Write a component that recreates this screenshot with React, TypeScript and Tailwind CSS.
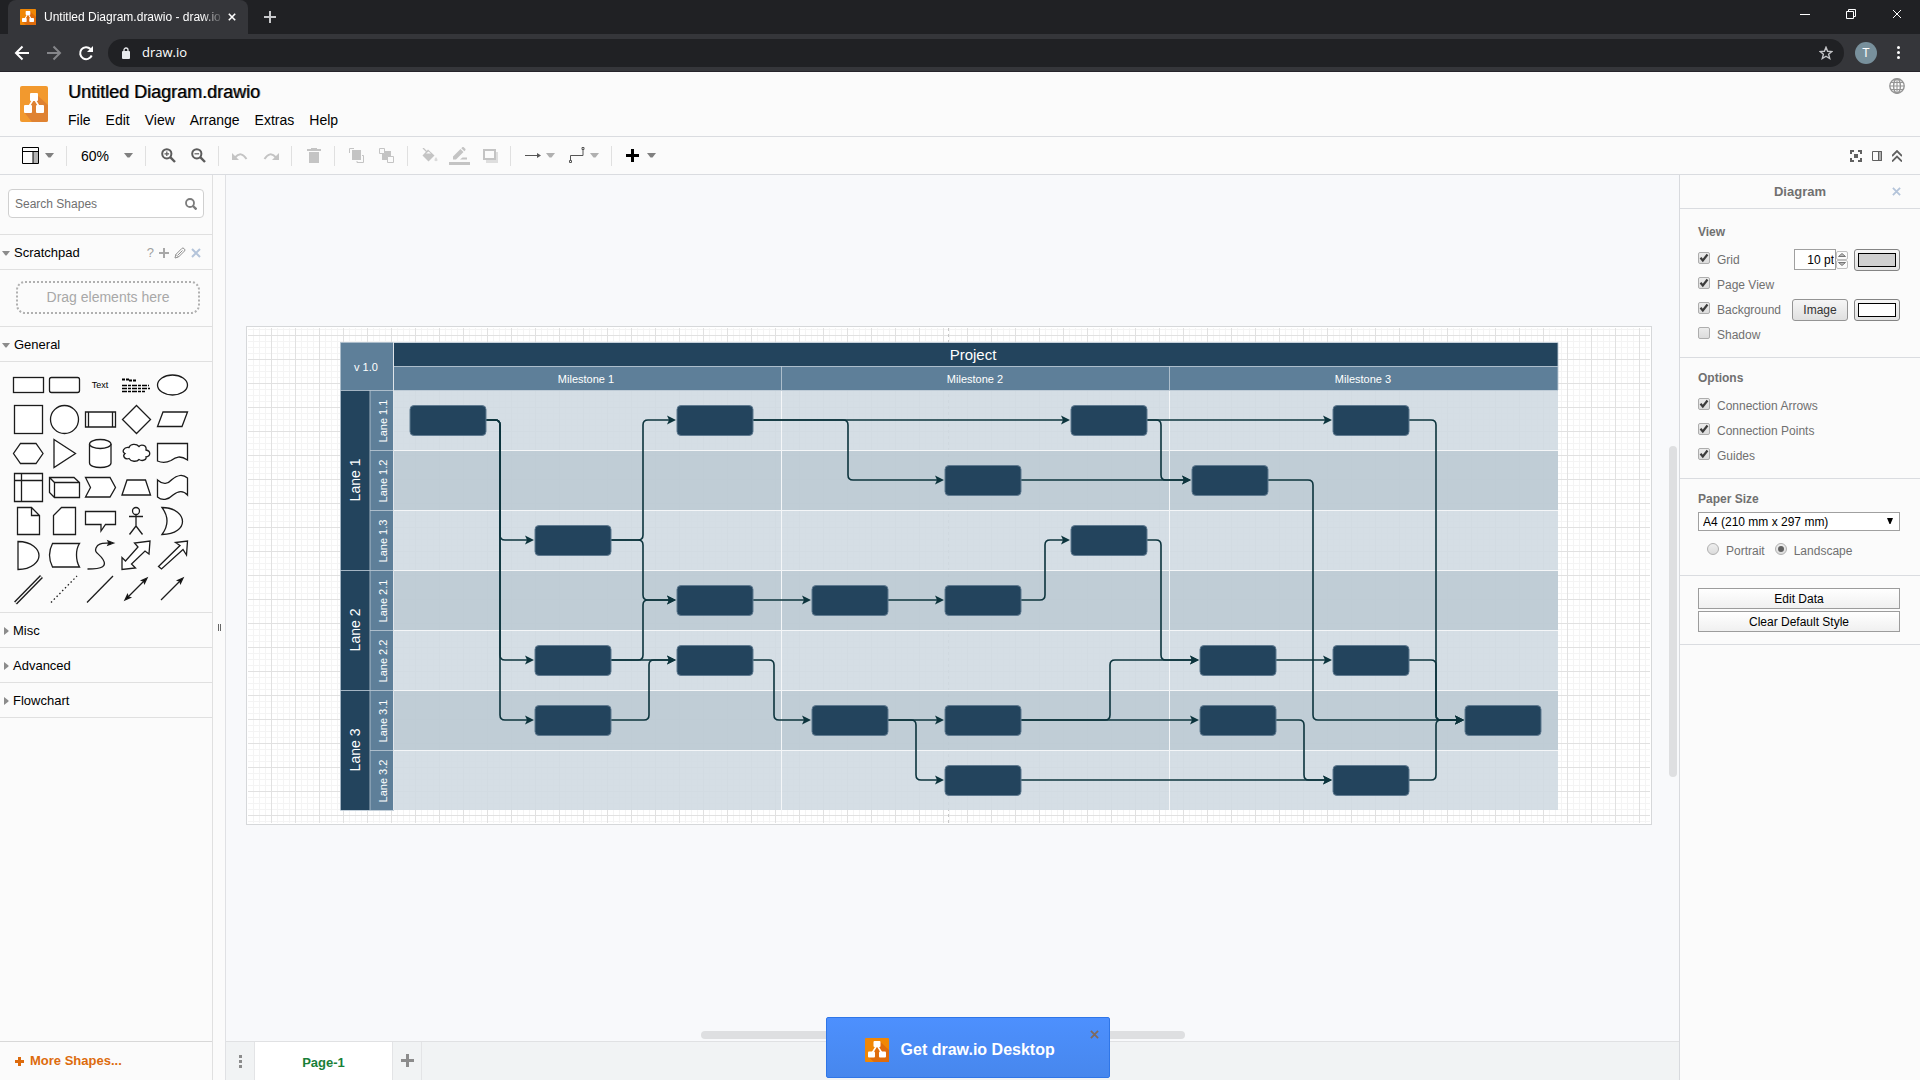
import type { ReactNode } from 'react';

/* ---------- shared bits ---------- */

function Logo({ className, tall = false }: { className: string; tall?: boolean }) {
  return tall ? (
    <svg className={className} viewBox="0 0 28 36" aria-hidden="true">
      <rect width="28" height="36" rx="2" fill="#f2992e" />
      <path d="M16 8l12 11v15q0 2-2 2H12L4 26l6-6z" fill="#df8232" />
      <path d="M13.500 13L8 22M14.500 13L20 22" stroke="#fff" strokeWidth="1.600" />
      <rect x="10" y="7" width="8" height="8" rx="1" fill="#fff" />
      <rect x="4" y="19" width="8" height="8" rx="1" fill="#fff" />
      <rect x="16" y="19" width="8" height="8" rx="1" fill="#fff" />
    </svg>
  ) : (
    <svg className={className} viewBox="0 0 24 24" aria-hidden="true">
      <rect width="24" height="24" rx="1" fill="#f08705" />
      <path d="M15 3.500L24 12v12H9l-5.500-5 5-5z" fill="#df6c0c" />
      <path d="M11.500 8L6.500 16M12.500 8L17.500 16" stroke="#fff" strokeWidth="1.600" />
      <rect x="8.500" y="3" width="7" height="6" rx="1" fill="#fff" />
      <rect x="3" y="13.500" width="7" height="6" rx="1" fill="#fff" />
      <rect x="14" y="13.500" width="7" height="6" rx="1" fill="#fff" />
    </svg>
  );
}

function Cross({ className, width = 2 }: { className: string; width?: number }) {
  return (
    <svg className={className} viewBox="0 0 10 10" stroke="currentColor" strokeWidth={width} aria-hidden="true">
      <path d="M1 1l8 8M9 1l-8 8" />
    </svg>
  );
}

function Caret({ className = 'text-[#808080]' }: { className?: string }) {
  return (
    <svg className={`h-[5px] w-[9px] shrink-0 ${className}`} viewBox="0 0 9 5" fill="currentColor" aria-hidden="true">
      <path d="M0 0h9L5.500 4.500h-2z" />
    </svg>
  );
}

/* ---------- browser frame ---------- */

function BrowserFrame() {
  return (
    <header className="shrink-0 bg-[#202124] text-white">
      <div className="flex h-[34px] items-stretch">
        <div className="ml-2 flex w-60 items-center rounded-t-lg bg-[#35363a] pr-2 pl-3">
          <Logo className="h-4 w-4 shrink-0" />
          <span className="ml-2 flex-1 text-xs whitespace-nowrap [mask-image:linear-gradient(to_right,#000_88%,transparent)]">
            Untitled Diagram.drawio - draw.io
          </span>
          <button className="p-1" aria-label="Close tab">
            <Cross className="h-2 w-2" width={2} />
          </button>
        </div>
        <button className="ml-4 flex items-center" aria-label="New tab">
          <svg className="h-3 w-3" viewBox="0 0 12 12" stroke="#c8c9cb" strokeWidth="2"><path d="M6 0v12M0 6h12" /></svg>
        </button>
        <div className="ml-auto flex items-start pt-[9px] pr-[18px]">
          <button className="mr-9" aria-label="Minimize">
            <svg className="h-[10px] w-[10px]" viewBox="0 0 10 10" stroke="#fff"><path d="M0 5.500h10" /></svg>
          </button>
          <button className="mr-9" aria-label="Restore">
            <svg className="h-[10px] w-[10px]" viewBox="0 0 10 10" stroke="#fff" fill="none"><path d="M.500 2.500h7v7h-7zM2.500 2V.500h7v7H8" /></svg>
          </button>
          <button aria-label="Close window"><Cross className="h-[10px] w-[10px]" width={1} /></button>
        </div>
      </div>
      <div className="flex h-[38px] items-center border-b border-[#26232a] bg-[#35363a] pr-5 pl-[14px]">
        <button aria-label="Back">
          <svg className="h-4 w-4" viewBox="0 0 16 16" fill="none" stroke="#fff" strokeWidth="2"><path d="M15 8H2M8.500 1.500L2 8l6.500 6.500" /></svg>
        </button>
        <button className="ml-4" aria-label="Forward">
          <svg className="h-4 w-4" viewBox="0 0 16 16" fill="none" stroke="#85868a" strokeWidth="2"><path d="M1 8h13M7.500 1.500L14 8l-6.500 6.500" /></svg>
        </button>
        <button className="ml-4" aria-label="Reload">
          <svg className="h-4 w-4" viewBox="0 0 16 16" fill="none"><path d="M13.700 10.500A6 6 0 1 1 12.500 4" stroke="#fff" strokeWidth="2" /><path d="M15 1v6H9z" fill="#fff" /></svg>
        </button>
        <div className="ml-[14px] flex h-7 flex-1 items-center rounded-full bg-[#202124] pr-[11px] pl-[14px]">
          <svg className="h-3 w-2" viewBox="0 0 8 12" aria-hidden="true"><rect y="4" width="8" height="8" rx="1" fill="#e8eaed" /><path d="M2 5V3a2 2 0 0 1 4 0v2" fill="none" stroke="#e8eaed" strokeWidth="1.300" /></svg>
          <input aria-label="Address" defaultValue="draw.io" className="ml-3 min-w-0 flex-1 bg-transparent font-['Open_Sans','Noto_Sans',sans-serif] text-[13px] outline-none" />
          <button aria-label="Bookmark">
            <svg className="h-[14px] w-[14px]" viewBox="0 0 14 14" fill="none" stroke="#c4c5c8" strokeWidth="1.400"><path d="M7 1.300l1.600 4 4.300.300-3.300 2.700 1.100 4.200L7 10.200l-3.700 2.300 1.100-4.200L1.100 5.600l4.300-.3z" /></svg>
          </button>
        </div>
        <button className="ml-[11px] h-[22px] w-[22px] rounded-full bg-[#78909c] text-xs" aria-label="Account">T</button>
        <button className="ml-5 flex flex-col gap-[2px]" aria-label="Browser menu">
          <span className="h-[3px] w-[3px] rounded-full bg-white" />
          <span className="h-[3px] w-[3px] rounded-full bg-white" />
          <span className="h-[3px] w-[3px] rounded-full bg-white" />
        </button>
      </div>
    </header>
  );
}

/* ---------- application header and toolbar ---------- */

function AppHeader() {
  return (
    <div className="flex h-[65px] shrink-0 items-start border-b border-[#dadce0] pl-5">
      <Logo tall className="mt-[14px] h-9 w-7" />
      <div className="ml-5 pt-2">
        <h1 className="text-lg leading-6 [text-shadow:1px_0_0_rgba(0,0,0,0.5)]">Untitled Diagram.drawio</h1>
        <nav className="mt-[6px] flex gap-[15px] text-sm leading-5">
          {['File', 'Edit', 'View', 'Arrange', 'Extras', 'Help'].map((m) => (
            <button key={m}>{m}</button>
          ))}
        </nav>
      </div>
      <button className="mt-[6px] mr-[15px] ml-auto" aria-label="Language">
        <svg className="h-4 w-4" viewBox="0 0 16 16" fill="none" stroke="#949494" strokeWidth="1.400">
          <circle cx="8" cy="8" r="7.200" /><ellipse cx="8" cy="8" rx="3.400" ry="7.200" /><path d="M8 1v14M1 8h14M2 4.500h12M2 11.500h12" strokeWidth="1.100" />
        </svg>
      </button>
    </div>
  );
}

function Separator({ className }: { className: string }) {
  return <span className={`h-5 w-px bg-[#e0e0e0] ${className}`} />;
}

function Tool({ label, className, children }: { label: string; className: string; children: ReactNode }) {
  return <button aria-label={label} className={`flex items-center ${className}`}>{children}</button>;
}

function Toolbar() {
  return (
    <div className="flex h-[38px] shrink-0 items-center border-b border-[#dadce0]">
      <Tool label="View" className="ml-[22px] gap-[6px]">
        <svg className="h-[17px] w-[17px]" viewBox="0 0 17 17" fill="none" stroke="#000"><path d="M11 5h5.500v11H11z" fill="#b3b3b3" stroke="none" /><path d="M.500.500h16v16H.500zM.500 4.500h16M11 4.500v12" /></svg>
        <Caret />
      </Tool>
      <Separator className="ml-3" />
      <Tool label="Zoom" className="ml-[14px] w-[52px] justify-between text-sm"><span>60%</span><Caret /></Tool>
      <Separator className="ml-3" />
      <Tool label="Zoom in" className="ml-[15px]">
        <svg className="h-[15px] w-[15px]" viewBox="0 0 15 15" fill="none" stroke="#5c5c5c" strokeWidth="2"><circle cx="5.800" cy="5.800" r="4.600" /><path d="M9.200 9.200L14 14" strokeWidth="2.400" /><path d="M5.800 3.500v4.600M3.500 5.800h4.600" strokeWidth="1.200" /></svg>
      </Tool>
      <Tool label="Zoom out" className="ml-[15px]">
        <svg className="h-[15px] w-[15px]" viewBox="0 0 15 15" fill="none" stroke="#5c5c5c" strokeWidth="2"><circle cx="5.800" cy="5.800" r="4.600" /><path d="M9.200 9.200L14 14" strokeWidth="2.400" /><path d="M3.500 5.800h4.600" strokeWidth="1.200" /></svg>
      </Tool>
      <Separator className="ml-3" />
      <Tool label="Undo" className="ml-[13px]">
        <svg className="h-2 w-4" viewBox="0 0 16 8" fill="none"><path d="M0 1v7h7z" fill="#c4c4c4" /><path d="M3 5.500Q9-1.500 14.500 7" stroke="#c4c4c4" strokeWidth="2" /></svg>
      </Tool>
      <Tool label="Redo" className="ml-[15px]">
        <svg className="h-2 w-4" viewBox="0 0 16 8" fill="none"><path d="M16 1v7H9z" fill="#c4c4c4" /><path d="M13 5.500Q7-1.500 1.500 7" stroke="#c4c4c4" strokeWidth="2" /></svg>
      </Tool>
      <Separator className="ml-3" />
      <Tool label="Delete" className="ml-[15px]">
        <svg className="h-[15px] w-[14px]" viewBox="0 0 14 15" fill="#c4c4c4"><path d="M4 0h6v1h4v2H0V1h4zM2 4h10v11H2z" /></svg>
      </Tool>
      <Separator className="ml-[13px]" />
      <Tool label="To front" className="ml-[14px]">
        <svg className="h-[15px] w-[15px]" viewBox="0 0 15 15" fill="none" stroke="#c4c4c4" strokeWidth="1"><path d="M3 2h9v10H3z" fill="#c4c4c4" stroke="none" /><path d="M.500 5V.500H5M10 14.500h4.500V9" /><path d="M8 13v1.500h3M14.500 11V7.500H13" /></svg>
      </Tool>
      <Tool label="To back" className="ml-[15px]">
        <svg className="h-[15px] w-[15px]" viewBox="0 0 15 15" fill="none" stroke="#c4c4c4"><path d="M3 3h9v9H3z" fill="#c4c4c4" stroke="none" /><path d="M.500.500h5v5h-5zM8.500 8.500h6v6h-6z" fill="#fbfbfb" /></svg>
      </Tool>
      <Separator className="ml-[13px]" />
      <Tool label="Fill color" className="ml-[14px]">
        <svg className="h-[15px] w-4" viewBox="0 0 16 15" fill="#c4c4c4"><path d="M1 0l5 5" stroke="#c4c4c4" strokeWidth="1.300" /><path d="M6 1.500L12.500 7.500 6.500 13.500.500 7.500z" /><path d="M4 5.500l2.500-2L9 5.500z" fill="#fbfbfb" /><path d="M14 9q2 2.500 1.500 3.500-1.500 1.500-3 0Q12 11 14 9z" opacity=".6" /></svg>
      </Tool>
      <Tool label="Line color" className="ml-[11px]">
        <svg className="h-[18px] w-[21px]" viewBox="0 0 21 18" fill="#c4c4c4"><path d="M4 12.500V9.500L11.500 2l3 3L7 12.500zM12.300 1.200L13.500 0h1L16.500 2v1l-1.200 1.200zM11 12.500l2.500-2H18v2z" /><path d="M0 15h21v3H0z" /></svg>
      </Tool>
      <Tool label="Shadow" className="ml-[13px]">
        <svg className="h-[14px] w-[15px]" viewBox="0 0 15 14" fill="none"><path d="M3 3h12v11H3z" fill="#dedede" /><path d="M1 1h11v9H1z" fill="#fbfbfb" stroke="#c4c4c4" strokeWidth="2" /></svg>
      </Tool>
      <Separator className="ml-3" />
      <Tool label="Connection" className="ml-[14px] gap-[5px]">
        <svg className="h-[7px] w-4" viewBox="0 0 16 7" fill="#555"><path d="M0 3h12V1l4 2.500L12 6V4H0z" /></svg>
        <Caret className="text-[#b0b0b0]" />
      </Tool>
      <Tool label="Waypoints" className="ml-[14px] gap-[5px]">
        <svg className="h-[17px] w-4" viewBox="0 0 16 17" fill="none" stroke="#555"><path d="M1.500 13V8.500H14V3M.500 13.500h2v2h-2zM13 .500h2v2h-2z" /></svg>
        <Caret className="text-[#b0b0b0]" />
      </Tool>
      <Separator className="ml-3" />
      <Tool label="Insert" className="ml-[14px] gap-2">
        <svg className="h-[13px] w-[13px]" viewBox="0 0 13 13" stroke="#000" strokeWidth="3"><path d="M6.500 0v13M0 6.500h13" /></svg>
        <Caret />
      </Tool>
      <div className="mr-[18px] ml-auto flex items-center gap-[10px]">
        <Tool label="Fullscreen" className="">
          <svg className="h-3 w-3" viewBox="0 0 12 12" fill="#606060"><path d="M0 0h4v2H2v2H0zM8 0h4v4h-2V2H8zM0 8h2v2h2v2H0zM10 8h2v4H8v-2h2zM4 4h4v4H4z" /></svg>
        </Tool>
        <Tool label="Format panel" className="">
          <svg className="h-[10px] w-[10px]" viewBox="0 0 10 10" fill="none" stroke="#606060"><path d="M6.500.500h3v9h-3z" fill="#b0b0b0" /><path d="M.500.500h9v9h-9z" /></svg>
        </Tool>
        <Tool label="Collapse" className="">
          <svg className="h-3 w-[10px]" viewBox="0 0 10 12" fill="none" stroke="#606060" strokeWidth="1.800"><path d="M0 6l5-5 5 5M0 11.500l5-5 5 5" /></svg>
        </Tool>
      </div>
    </div>
  );
}

/* ---------- shape palette ---------- */

const head = 'M0 0L-5.500-2-4.500 0-5.500 2z';

const SHAPES: [string, ReactNode][] = [
  ['Rectangle', <rect x="-14.500" y="-7.500" width="30" height="15" />],
  ['Rounded rectangle', <rect x="-14.500" y="-7.500" width="30" height="15" rx="2" />],
  ['Text', <text x="0" y="3" fontSize="9" textAnchor="middle" fill="#000" stroke="none">Text</text>],
  ['Textbox', <g stroke="#000"><path d="M-14-5.500h8M-7-4.500h7" strokeWidth="2" strokeDasharray="3 1" /><path d="M-14 .500h27M-14 3.500h28M-14 6.500h23" strokeDasharray="5 1 3 1" /></g>],
  ['Ellipse', <ellipse cx=".5" rx="15" ry="10" />],
  ['Square', <rect x="-13.500" y="-13.500" width="28" height="28" />],
  ['Circle', <circle cx=".5" cy=".5" r="14" />],
  ['Process', <path d="M-14.500-7h30v15h-30zM-11.500-7v15M12.500-7v15" />],
  ['Diamond', <path d="M.500-13.500l14 14-14 14-14-14z" />],
  ['Parallelogram', <path d="M-9-7h24.500L10 7.500h-24.500z" />],
  ['Hexagon', <path d="M-7.500-9.500H8L15 .500l-7 10H-7.500l-7-10z" />],
  ['Triangle', <path d="M-10-13.500L11.500.500-10 14.500z" />],
  ['Cylinder', <g><path d="M-10.500-9v19c0 6 21.500 6 21.500 0V-9" /><ellipse cx=".25" cy="-9" rx="10.750" ry="4.500" /></g>],
  ['Cloud', <path d="M-7-5.500C-12-6.500-15-1-11 .500-14 3-11 7-7 5.500-5 9 1 9 3 6.500 7 9 11 6 10 4 15 3 15-2 10-3 11-8 5-9 3-6.500 0-10-6-9-7-5.500z" />],
  ['Document', <path d="M-14.500-9.500h30V7C8 2 4 4-1 7.500-6 10-10 10-14.500 8z" />],
  ['Internal storage', <path d="M-13.500-13.500h28v28h-28zM-6.500-13.500v28M-13.500-6.500h28" />],
  ['Cube', <path d="M-14.500-9.500H10l5.500 5v15H-9.500l-5-5zM-14.500-9.500l5 5h25M-9.500-4.500v15" />],
  ['Step', <path d="M-14.500-9.500H10l5.500 10-5.500 9.500h-24.500l5-9.500z" />],
  ['Trapezoid', <path d="M-14 8l5-15H9.500l5 15z" />],
  ['Tape', <path d="M-14.500-7C-9-2-4-3 0-7.500 5-12 11-13 15.500-9V8C11 3 6 4 1 8c-5 5-11 6-15.500 2z" />],
  ['Note', <path d="M-10.500-13.500H3.500l8 8V13.500h-22zM3.500-13.500v8h8" />],
  ['Card', <path d="M-2.500-13.500h14V13.500h-22v-19z" />],
  ['Callout', <path d="M-14.500-9.500h30V3.500h-10L1 10V3.500h-15.500z" />],
  ['Actor', <g><circle cx="0" cy="-10" r="3.500" /><path d="M0-6.500V5M-7-4.500H7M0 5l-6.500 8.500M0 5l6.500 8.500" /></g>],
  ['Or', <path d="M-10-13.500c14 0 20.500 8 20.500 14S4 13.500-10 13.500q10-13.500 0-27z" />],
  ['And', <path d="M-10-13.500c14 0 21 8 21 14s-7 14-21 14z" />],
  ['Data storage', <path d="M-11.500-11.500H15.500c-4 6-4 17 0 23.500h-27q-6-12 0-23.500z" />],
  ['Curve', <g><path d="M-12.500 14C3 14 7 11 3 4.500S-6-2-4-7 2-11.500 9-12" fill="none" /><path d={head} transform="translate(13.500 -12)" fill="#000" /></g>],
  ['Bidirectional arrow', <path d="M-14 14.500V2.500l3.500 3.500L2-8l-3.500-4 15.500-2-1 13-4-3L-4.500 9l4 4z" />],
  ['Arrow', <path d="M-13.500 11.500L8-9.500 3.500-12.500l12-1.500-1 14L11-5.500-10.500 14z" />],
  ['Link', <g><path d="M-12.500 14L13.500-12.500" strokeWidth="4" /><path d="M-12.500 14L13.500-12.500" stroke="#fff" strokeWidth="1.200" /></g>],
  ['Dashed line', <path d="M-13 13.500L13-13" strokeDasharray="1.500 2.500" />],
  ['Line', <path d="M-13 13.500L13-13" />],
  ['Bidirectional connector', <g><path d="M-9 9L9-9" /><path d={head} transform="translate(11 -11) rotate(-45)" fill="#000" /><path d={head} transform="translate(-11 11) rotate(135)" fill="#000" /></g>],
  ['Directional connector', <g><path d="M-11 11L9-9" /><path d={head} transform="translate(11 -11) rotate(-45)" fill="#000" /></g>],
];

function Folder({ title, open = false }: { title: string; open?: boolean }) {
  return (
    <button className="flex h-[35px] w-full items-center border-b border-[#e0e0e0] pt-[2px] pl-[2px] text-left text-[13px]">
      {open ? (
        <svg className="mr-1 h-[5px] w-2" viewBox="0 0 8 5" fill="#8c8c8c"><path d="M0 0h8L4.500 4.500h-1z" /></svg>
      ) : (
        <svg className="mr-1 ml-[2px] h-2 w-[5px]" viewBox="0 0 5 8" fill="#8c8c8c"><path d="M0 0l4.500 3.500v1L0 8z" /></svg>
      )}
      {title}
    </button>
  );
}

function Sidebar() {
  return (
    <aside className="flex w-[213px] shrink-0 flex-col border-r border-[#e0e0e0]">
      <div className="border-b border-[#e0e0e0] px-2 pt-[14px] pb-4">
        <div className="flex h-[29px] items-center rounded border border-[#d0d0d0] bg-white px-[6px]">
          <input aria-label="Search Shapes" placeholder="Search Shapes" className="min-w-0 flex-1 bg-transparent text-xs outline-none placeholder:text-[#707070]" />
          <svg className="h-3 w-3" viewBox="0 0 12 12" fill="none" stroke="#7c7c7c" strokeWidth="1.800"><circle cx="5" cy="5" r="4" /><path d="M8 8l3.500 3.500" strokeWidth="2.400" /></svg>
        </div>
      </div>
      <div className="relative">
        <Folder title="Scratchpad" open />
        <div className="absolute top-0 right-[11px] flex h-[35px] items-center gap-[5px] text-[13px] text-[#a0a0a0]">
          <button aria-label="Help">?</button>
          <button aria-label="Add"><svg className="h-[10px] w-[10px]" viewBox="0 0 10 10" stroke="#a8a8a8" strokeWidth="2"><path d="M5 0v10M0 5h10" /></svg></button>
          <button aria-label="Edit"><svg className="h-3 w-3" viewBox="0 0 12 12" fill="none" stroke="#909090"><path d="M1 11l.800-3.500 6-6q1-1 2.200 0l.5.500q1 1 0 2l-6 6zM2 7.500l2.500 2.500M4 8l4.500-4.500" /></svg></button>
          <button className="text-[#b4c4da]" aria-label="Close"><Cross className="h-[10px] w-[10px]" width={2} /></button>
        </div>
      </div>
      <div className="border-b border-[#e0e0e0] pt-[11px] pr-3 pb-3 pl-4">
        <svg className="h-[33px] w-full overflow-visible" viewBox="0 0 184 33"><rect x="1" y="1" width="182" height="31" rx="8" fill="none" stroke="#b0b0b0" strokeWidth="2" strokeDasharray="2 2" /><text x="92" y="21" fontSize="14" textAnchor="middle" fill="#a8a8a8">Drag elements here</text></svg>
      </div>
      <Folder title="General" open />
      <div className="grid grid-cols-[repeat(5,36px)] border-b border-[#e0e0e0] pt-[6px] pb-[6px] pl-[10px]">
        {SHAPES.map(([name, art]) => (
          <button key={name} aria-label={name}>
            <svg className="block h-[34px] w-9" viewBox="-18 -17 36 34" fill="#fff" stroke="#1c1c1c" strokeWidth="1.300">{art}</svg>
          </button>
        ))}
      </div>
      <Folder title="Misc" />
      <Folder title="Advanced" />
      <Folder title="Flowchart" />
      <button className="mt-auto flex h-[39px] items-center border-t border-[#d8d8d8] pl-[15px] text-[13px] font-bold text-[#dd6b0d]">
        <svg className="mr-[6px] h-[9px] w-[9px]" viewBox="0 0 9 9" stroke="currentColor" strokeWidth="3"><path d="M4.500 0v9M0 4.500h9" /></svg>
        More Shapes...
      </button>
    </aside>
  );
}

/* ---------- diagram ---------- */

const LANES = ['Lane 1.1', 'Lane 1.2', 'Lane 1.3', 'Lane 2.1', 'Lane 2.2', 'Lane 3.1', 'Lane 3.2'];
const GROUPS = [
  { label: 'Lane 1', y: 390, h: 180 },
  { label: 'Lane 2', y: 570, h: 120 },
  { label: 'Lane 3', y: 690, h: 120 },
];
const NODES: number[][] = [
  [410, 677, 1071, 1333],
  [945, 1192],
  [535, 1071],
  [677, 812, 945],
  [535, 677, 1200, 1333],
  [535, 812, 945, 1200, 1465],
  [945, 1333],
];
/* Each connector: start x, start y, bend x, end y, end x */
const EDGES = [
  [486, 420, 500, 540, 535],
  [486, 420, 500, 660, 535],
  [486, 420, 500, 720, 535],
  [611, 540, 643, 420, 677],
  [611, 540, 643, 600, 677],
  [611, 660, 643, 600, 677],
  [611, 660, 643, 660, 677],
  [611, 720, 649, 660, 677],
  [753, 420, 848, 420, 1071],
  [753, 420, 848, 480, 945],
  [753, 600, 780, 600, 812],
  [888, 600, 900, 600, 945],
  [1021, 600, 1045, 540, 1071],
  [753, 660, 774, 720, 812],
  [888, 720, 916, 720, 945],
  [888, 720, 916, 780, 945],
  [1021, 480, 1100, 480, 1192],
  [1147, 420, 1161, 480, 1192],
  [1147, 420, 1161, 420, 1333],
  [1147, 540, 1161, 660, 1200],
  [1021, 720, 1110, 660, 1200],
  [1021, 720, 1110, 720, 1200],
  [1021, 780, 1110, 780, 1333],
  [1276, 660, 1300, 660, 1333],
  [1276, 720, 1304, 780, 1333],
  [1268, 480, 1313, 720, 1465],
  [1409, 420, 1436, 720, 1465],
  [1409, 660, 1436, 720, 1465],
  [1409, 780, 1436, 720, 1465],
];

function edgePath([x1, y1, bx, y2, x2]: number[]) {
  if (y1 === y2) return `M${x1} ${y1}H${x2 - 6}`;
  const d = y2 > y1 ? 5 : -5;
  return `M${x1} ${y1}H${bx - 5}Q${bx} ${y1} ${bx} ${y1 + d}V${y2 - d}Q${bx} ${y2} ${bx + 5} ${y2}H${x2 - 6}`;
}

function Diagram() {
  return (
    <svg className="block h-[499px] w-[1406px]" viewBox="246 326 1406 499" role="img" aria-label="Project swimlane diagram" fontSize="11">
      <defs>
        <pattern id="minor" x="247" y="335" width="6" height="6" patternUnits="userSpaceOnUse"><path d="M.500 0v6M0 .500h6" stroke="#f4f4f4" /></pattern>
        <pattern id="major" x="247" y="335" width="24" height="24" patternUnits="userSpaceOnUse"><path d="M.500 0v24M0 .500h24" stroke="#e1e1e1" /></pattern>
      </defs>
      <rect x="246.500" y="326.500" width="1405" height="498" fill="#fff" stroke="#d6d8da" />
      <rect x="248" y="328" width="1402" height="495" fill="url(#minor)" />
      <rect x="248" y="328" width="1402" height="495" fill="url(#major)" />
      <path d="M948.500 328v495" stroke="#c8c8c8" strokeDasharray="3 3" />

      {LANES.map((lane, i) => (
        <g key={lane}>
          <rect x="394" y={390 + 60 * i} width="1164" height="60" fill={i % 2 ? '#bdcad4' : '#cfd9e1'} fillOpacity={i % 2 ? 0.95 : 0.88} />
          <rect x="370" y={390 + 60 * i} width="24" height="60" fill="#5e7f99" />
        </g>
      ))}
      <path d="M394 450.500H1558M394 510.500H1558M394 570.500H1558M394 630.500H1558M394 690.500H1558M394 750.500H1558M781.500 390V810M1169.500 390V810" stroke="#f4f6f8" fill="none" />
      <rect x="340" y="342" width="54" height="48" fill="#5e7f99" />
      <rect x="394" y="343" width="1164" height="23" fill="#23445d" />
      <rect x="394" y="366" width="1164" height="24" fill="#5e7f99" />
      {GROUPS.map((g) => (
        <rect key={g.label} x="340" y={g.y} width="30" height={g.h} fill="#23445d" />
      ))}
      <path d="M340.500 342V810.500H394M340 342.500H1558V390M370 390V810M340 390.500H1558M394 366.500H1558M340 570.500H394M340 690.500H394M370 450.500h24M370 510.500h24M370 630.500h24M370 750.500h24M781.500 366v24M1169.500 366v24" stroke="#bac8d3" strokeOpacity=".85" fill="none" />
      <path d="M393.500 342V810" stroke="#dfe5ea" />

      <g fill="#fff" textAnchor="middle">
        <text x="973" y="360" fontSize="15">Project</text>
        <text x="586" y="383">Milestone 1</text>
        <text x="975" y="383">Milestone 2</text>
        <text x="1363" y="383">Milestone 3</text>
        <text x="366" y="371">v 1.0</text>
        {GROUPS.map((g) => (
          <text key={g.label} fontSize="14" transform={`translate(360 ${g.y + g.h / 2}) rotate(-90)`}>{g.label}</text>
        ))}
        {LANES.map((lane, i) => (
          <text key={lane} transform={`translate(387 ${421 + 60 * i}) rotate(-90)`}>{lane}</text>
        ))}
      </g>

      <g fill="none" stroke="#0c343d" strokeWidth="1.600">
        {EDGES.map((e, i) => (
          <path key={i} d={edgePath(e)} />
        ))}
      </g>
      <g fill="#0c343d">
        {EDGES.map(([, , , y, x], i) => (
          <path key={i} d={`M${x - 1} ${y}l-9-4.500 2 4.500-2 4.500z`} />
        ))}
      </g>
      <g fill="#23445d" stroke="#5f7a90" strokeWidth="1">
        {NODES.map((row, i) => row.map((x) => <rect key={`${i}-${x}`} x={x} y={405.5 + 60 * i} width="76" height="30" rx="4" />))}
      </g>
    </svg>
  );
}

function Canvas() {
  return (
    <main className="flex min-w-0 flex-1 flex-col">
      <div className="relative min-h-0 flex-1 overflow-hidden bg-[#f8f9fb] pt-[151px] pl-5">
        <Diagram />
        <span className="absolute top-[271px] right-[2px] h-[331px] w-2 rounded-full bg-[#dedfe1]" />
        <span className="absolute bottom-[2px] left-[475px] h-2 w-[484px] rounded-full bg-[#dedfe1]" />
      </div>
      <div className="flex h-[39px] shrink-0 border-t border-[#e0e1e3] bg-[#f1f3f4]">
        <button className="flex w-[29px] flex-col items-center justify-center gap-[2px] border-r border-[#e3e4e6]" aria-label="Pages">
          <span className="h-[3px] w-[3px] bg-[#8c8c8c]" />
          <span className="h-[3px] w-[3px] bg-[#8c8c8c]" />
          <span className="h-[3px] w-[3px] bg-[#8c8c8c]" />
        </button>
        <button className="w-[138px] border-r border-[#e3e4e6] bg-white pt-1 text-[13px] font-bold text-[#188038]">Page-1</button>
        <button className="flex w-[29px] items-center justify-center border-r border-[#e3e4e6] pb-[2px]" aria-label="Insert page">
          <svg className="h-[13px] w-[13px]" viewBox="0 0 13 13" stroke="#8c8c8c" strokeWidth="3"><path d="M6.500 0v13M0 6.500h13" /></svg>
        </button>
      </div>
    </main>
  );
}

/* ---------- format panel ---------- */

function Check({ label, checked = true }: { label: string; checked?: boolean }) {
  return (
    <label className="flex h-[25px] items-center text-xs text-[#707070]">
      <span className="mb-1 grid">
        <input type="checkbox" defaultChecked={checked} className="peer h-3 w-3 appearance-none rounded-[2px] border border-[#adadad] bg-linear-to-b from-[#ececec] to-[#dcdcdc] [grid-area:1/1]" />
        <svg className="pointer-events-none invisible h-3 w-3 [grid-area:1/1] peer-checked:visible" viewBox="0 0 12 12" fill="none" stroke="#3c3c3c" strokeWidth="2.200"><path d="M2.500 5.800l2.300 2.700L9.500 2.500" /></svg>
      </span>
      <span className="ml-[7px]">{label}</span>
    </label>
  );
}

function Radio({ label, checked = false }: { label: string; checked?: boolean }) {
  return (
    <label className="flex items-center gap-[7px]">
      <span className="mb-1 grid place-items-center">
        <input type="radio" name="orientation" defaultChecked={checked} className="peer h-3 w-3 appearance-none rounded-full border border-[#b0b0b0] bg-linear-to-b from-[#eee] to-[#dcdcdc] [grid-area:1/1]" />
        <span className="pointer-events-none invisible h-[6px] w-[6px] rounded-full bg-[#606060] [grid-area:1/1] peer-checked:visible" />
      </span>
      {label}
    </label>
  );
}

function Swatch({ label, color }: { label: string; color: string }) {
  return (
    <button aria-label={label} className="flex h-[22px] w-[46px] items-center justify-center rounded-[3px] border border-[#848484] bg-linear-to-b from-[#f6f6f6] to-[#e2e2e2]">
      <span className={`h-[14px] w-[38px] border border-black ${color}`} />
    </button>
  );
}

function FormatPanel() {
  return (
    <aside className="w-[241px] shrink-0 border-l border-[#d8dade] text-[#707070]">
      <div className="relative flex h-[34px] items-center justify-center border-b border-[#dadce0] text-[13px] font-bold">
        <span>Diagram</span>
        <button className="absolute right-[19px] text-[#b4c4da]" aria-label="Close panel"><Cross className="h-[9px] w-[9px]" /></button>
      </div>

      <section className="border-b border-[#dadce0] pt-[15px] pr-5 pb-[10px] pl-[18px]">
        <h2 className="h-[23px] text-xs leading-4 font-bold">View</h2>
        <div className="flex h-[25px] items-center">
          <Check label="Grid" />
          <input aria-label="Grid size" defaultValue="10 pt" className="ml-auto h-[21px] w-[42px] border border-[#a0a0a0] bg-white pr-px text-right text-xs text-black outline-none" />
          <span className="mr-[6px] flex flex-col">
            {['Increase', 'Decrease'].map((n) => (
              <button key={n} aria-label={n} className="flex h-[9px] w-3 items-center justify-center rounded-[2px] border border-[#c0c0c0] bg-[#fbfbfb]">
                <svg className="h-1 w-2" viewBox="0 0 8 4" fill="#b8b8b8" stroke="#777"><path d={n === 'Increase' ? 'M.500 3.500L4 .500l3.500 3z' : 'M.500.500L4 3.500 7.500.500z'} /></svg>
              </button>
            ))}
          </span>
          <Swatch label="Grid color" color="bg-[#d0d0d0]" />
        </div>
        <Check label="Page View" />
        <div className="flex h-[25px] items-center">
          <Check label="Background" />
          <button className="mr-[6px] ml-auto h-[22px] w-14 rounded-[3px] border border-[#949494] bg-linear-to-b from-[#f6f6f6] to-[#e0e0e0] text-xs text-[#333]">Image</button>
          <Swatch label="Background color" color="bg-white" />
        </div>
        <Check label="Shadow" checked={false} />
      </section>

      <section className="border-b border-[#dadce0] pt-3 pr-5 pb-[10px] pl-[18px]">
        <h2 className="h-[23px] text-xs leading-4 font-bold">Options</h2>
        <Check label="Connection Arrows" />
        <Check label="Connection Points" />
        <Check label="Guides" />
      </section>

      <section className="border-b border-[#dadce0] pt-3 pr-5 pb-3 pl-[18px]">
        <h2 className="h-[21px] text-xs leading-4 font-bold">Paper Size</h2>
        <div className="relative">
          <select aria-label="Paper Size" className="block h-[19px] w-full appearance-none border border-[#a0a0a0] bg-white pl-1 text-xs text-black">
            <option>A4 (210 mm x 297 mm)</option>
          </select>
          <svg className="pointer-events-none absolute top-[6px] right-[7px] h-[6px] w-[6px]" viewBox="0 0 6 6"><path d="M0 0h6L3.500 6h-1z" /></svg>
        </div>
        <div className="mt-2 flex h-6 items-center gap-[10px] pl-[9px] text-xs">
          <Radio label="Portrait" />
          <Radio label="Landscape" checked />
        </div>
      </section>

      <section className="flex flex-col gap-[2px] border-b border-[#dadce0] pt-3 pr-5 pb-3 pl-[18px]">
        {['Edit Data', 'Clear Default Style'].map((b) => (
          <button key={b} className="h-[21px] border border-[#9c9c9c] bg-linear-to-b from-white to-[#f0f0f0] text-xs text-black">{b}</button>
        ))}
      </section>
    </aside>
  );
}

/* ---------- page ---------- */

export default function App() {
  return (
    <div className="relative flex h-screen flex-col overflow-hidden bg-[#fbfbfb] font-['Liberation_Sans',Arial,sans-serif] text-black">
      <BrowserFrame />
      <AppHeader />
      <Toolbar />
      <div className="flex min-h-0 flex-1">
        <Sidebar />
        <div className="flex w-[13px] shrink-0 items-center justify-center border-r border-[#e0e1e4]">
          <span className="h-[7px] w-[3px] border-x border-[#666]" />
        </div>
        <Canvas />
        <FormatPanel />
      </div>
      <div className="absolute bottom-[2px] left-[43%] flex h-[61px] w-[284px] items-center rounded-[2px] border border-[#2f76e8] bg-linear-to-b from-[#4d90fe] to-[#4787ed] pt-1 text-base font-bold text-white">
        <Logo className="ml-[38px] h-6 w-6" />
        <a href="#desktop" className="ml-3">Get draw.io Desktop</a>
        <button className="absolute top-3 right-[10px] text-[#806a5c]" aria-label="Dismiss"><Cross className="h-[9px] w-[9px]" /></button>
      </div>
    </div>
  );
}
